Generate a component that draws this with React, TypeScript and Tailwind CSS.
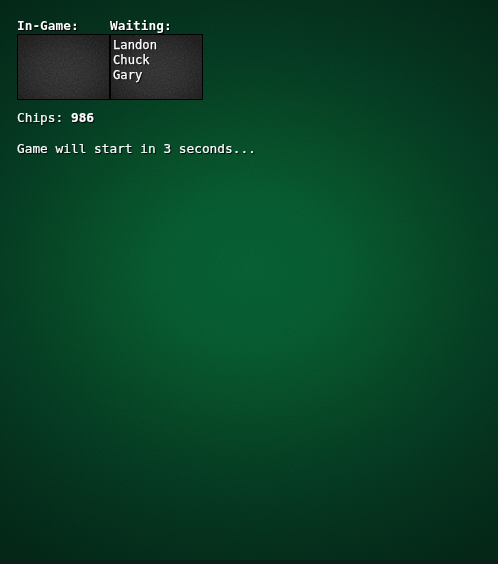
const waiting = ["Landon", "Chuck", "Gary"];

function Grain({ id, opacity }: { id: string; opacity: number }) {
  return (
    <svg className="pointer-events-none absolute inset-0 h-full w-full mix-blend-soft-light" aria-hidden="true">
      <filter id={id} x="0" y="0" width="100%" height="100%" colorInterpolationFilters="sRGB">
        <feTurbulence type="fractalNoise" baseFrequency="0.6" numOctaves="2" seed="4" />
        <feColorMatrix type="saturate" values="0" />
        <feComponentTransfer>
          <feFuncA type="linear" slope="0" intercept={opacity} />
        </feComponentTransfer>
      </filter>
      <rect width="100%" height="100%" filter={`url(#${id})`} />
    </svg>
  );
}

function PlayerList({ title, players, id }: { title: string; players: string[]; id: string }) {
  return (
    <section className="w-[93px]">
      <h2 className="h-[17px] text-[12.8px] leading-[17px] font-bold">{title}</h2>
      <div className="relative h-[66px] border border-black bg-[radial-gradient(ellipse_62%_68%_at_50%_58%,#363636_0%,#303030_50%,#212121_100%)]">
        <Grain id={id} opacity={0.35} />
        <ul className="relative px-[2px] pt-[3px] text-[12.18px] leading-[15px] [-webkit-text-stroke:0.25px_white]">
          {players.map((name) => (
            <li key={name}>{name}</li>
          ))}
        </ul>
      </div>
    </section>
  );
}

export default function App() {
  return (
    <div className="flex h-[564px] w-[498px] flex-col bg-[#042718] font-['DejaVu_Sans_Mono',monospace] text-white [text-shadow:1px_1px_1px_#000]">
      <main className="relative h-[560px] bg-[radial-gradient(ellipse_395px_325px_at_50%_270px,#076034_0%,#075a30_24%,#074a27_46%,#064224_56%,#053b23_66%,#05301c_85%,#042718_104%)]">
        <Grain id="felt" opacity={0.1} />
        <div className="relative px-[17px] pt-[17px]">
          <div className="flex">
            <PlayerList title="In-Game:" players={[]} id="grain-in" />
            <PlayerList title="Waiting:" players={waiting} id="grain-wait" />
          </div>
          <p className="mt-[10px] text-[12.8px] leading-[16px] [-webkit-text-stroke:0.2px_white]">
            Chips: <b>986</b>
          </p>
          <p className="mt-[15px] text-[12.8px] leading-[16px] [-webkit-text-stroke:0.2px_white]">
            Game will start in 3 seconds...
          </p>
        </div>
      </main>
      <div className="h-1 bg-[#0c1f17]" />
    </div>
  );
}
